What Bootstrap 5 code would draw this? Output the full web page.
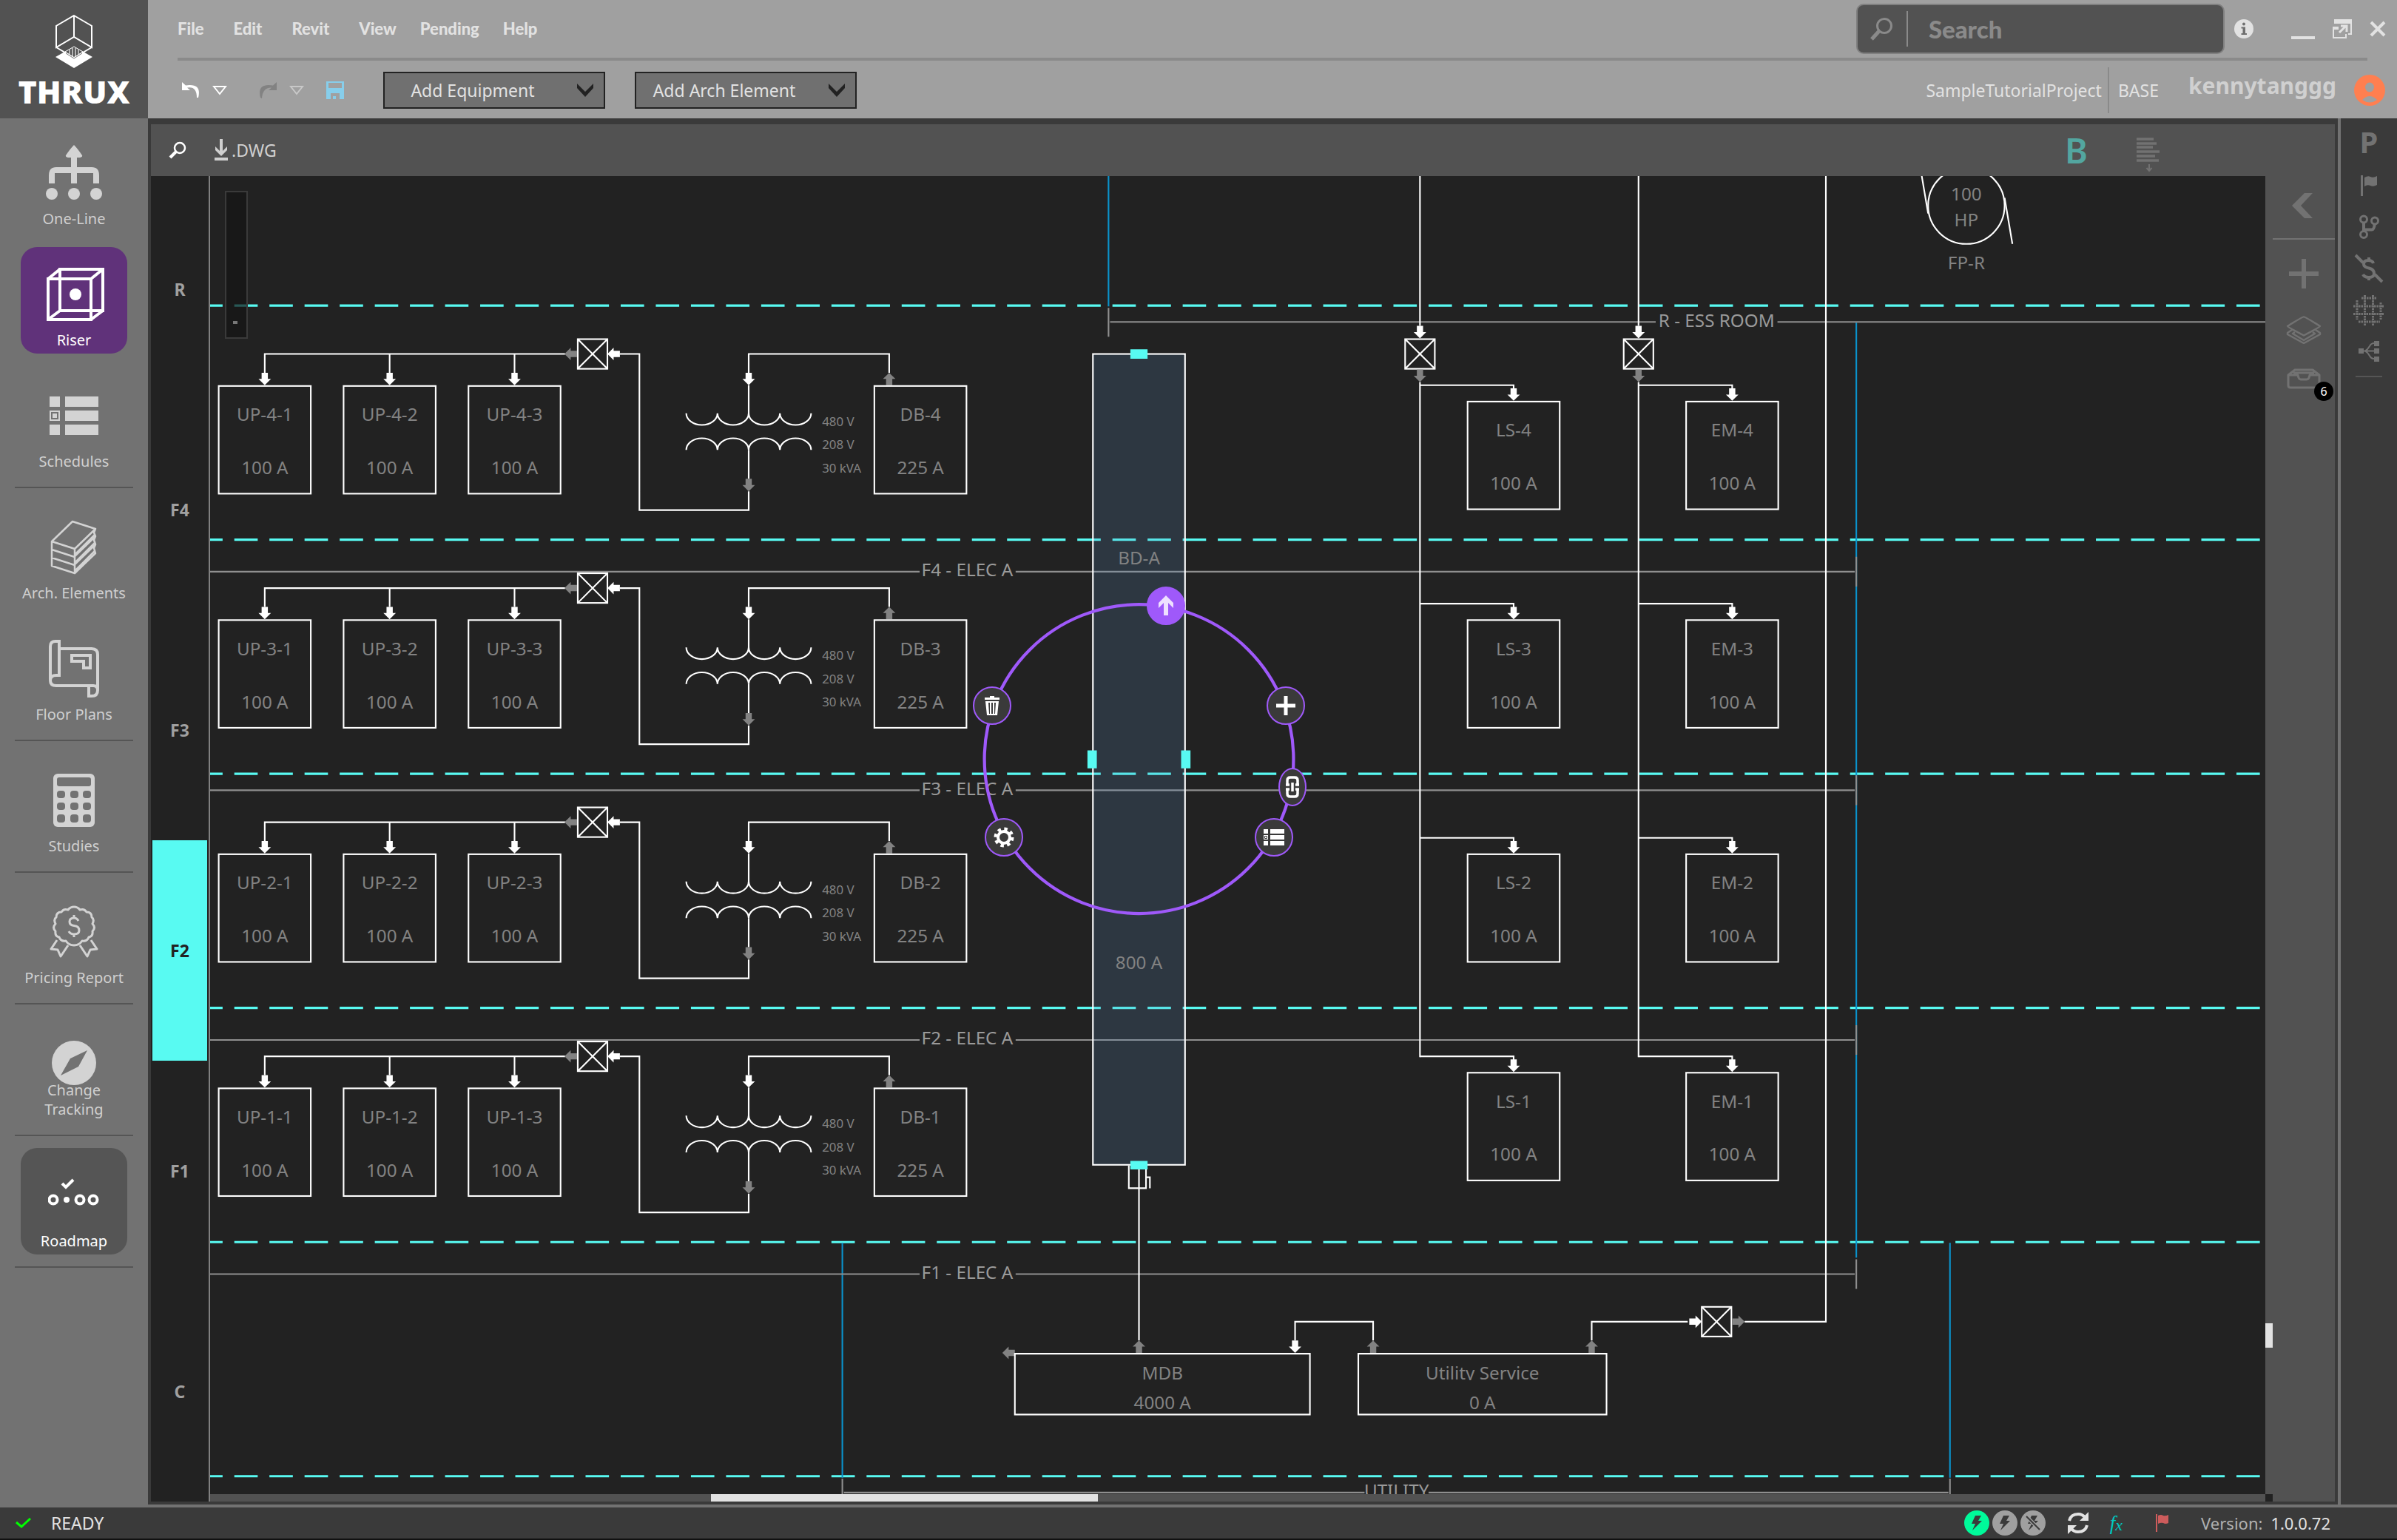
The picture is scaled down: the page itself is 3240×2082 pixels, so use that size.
<!DOCTYPE html>
<html lang="en">
<head>
<meta charset="utf-8">
<meta name="viewport" content="width=device-width, initial-scale=1">
<title>THRUX – Riser</title>
<link href="https://cdn.jsdelivr.net/npm/bootstrap@5.3.0/dist/css/bootstrap.min.css" rel="stylesheet">
<style>
:root{--ink:#222;--deep:#3a3a3a;--panel:#525252;--mid:#727272;--bar:#a0a0a0;--cyan:#58faf2;--violet:#9f59fa}
body{font-family:"Noto Sans","Open Sans",sans-serif;font-size:23px;line-height:32px;background:var(--deep);color:#d0d0d0}
button{background:none;border:0;padding:0;color:inherit;display:inline-flex;align-items:center;justify-content:center}
svg{display:block;flex:none}
a{text-decoration:none}
.min-0{min-width:0;min-height:0}
/* header */
.brand-box{width:200px;background:var(--panel);padding-top:20px;gap:8px}
.brand-name{font-family:"Open Sans",sans-serif;font-weight:800;font-size:43px;line-height:44px;color:#fff}
.top-bar{background:var(--bar)}
.menu-row,.tool-row{height:78px}
.menu-row{padding:0 15px 0 40px}
.menu-row .nav{gap:40px;font-family:Lato,sans-serif;font-weight:900;font-size:22px}
.menu-row .nav a{color:#e2e2e2}
.menu-row .nav .near{margin-left:-8px}
.search-box{width:498px;height:68px;background:var(--panel);border:2px solid #808080;border-radius:10px;color:#8a8a8a}
.search-box input{background:none;border:0;outline:0;color:#8a8a8a;font-family:Lato,sans-serif;font-weight:900;font-size:33px;min-width:0;padding:0 0 0 4px}
.search-box input::placeholder{color:#8a8a8a;opacity:1}
.v-rule{width:2px;background:#8a8a8a}
.head-rule{height:4px;background:#8a8a8a;margin:0 40px}
.win-btns{color:#e2e2e2}
.win-btns .info{margin:0 51px 0 13px}
.tool-row{padding:2px 16px 0 45px}
.redo{margin-left:42px}
.save{margin-left:30px}
.pick{width:300px;height:50px;margin-left:40px}
.save+.pick{margin-left:53px}
.pick select{appearance:none;width:300px;height:50px;background:#707070;border:2px solid var(--ink);color:#e2e2e2;padding:0 58px 0 0;text-align:center;text-align-last:center}
.pick svg{margin-left:-38px;pointer-events:none}
.account{color:#e2e2e2}
.account .v-rule{height:62px}
.user-name{font-weight:700;font-size:30px;color:#d0d0d0;margin-left:40px;padding-bottom:12px}
/* left navigation */
.side-nav{width:200px;background:var(--mid);padding:10px 20px;font-size:20px;line-height:26px;color:#d0d0d0}
.side-nav a{color:inherit;height:144px;margin:0 8px;padding:0 0 5px;border-radius:22px;white-space:nowrap}
.side-nav a+a{margin-top:20px}
.side-nav hr{margin:16px 0;border:0;height:2px;background:#555;opacity:1}
.side-nav .pic{height:112px;padding-top:14px}
.side-nav .on{background:#60327a;color:#fff}
.side-nav .road{background:#555;color:#fff}
.side-nav .snug{margin-top:-6px}
/* work area */
.work{padding:8px 4px 4px}
.sheet{background:var(--panel)}
.sheet-bar{height:70px;padding:0 232px 0 24px}
.dwg{margin-left:37px}
.bold-b{color:#53a6a0;font-weight:600;font-size:47px;line-height:60px;margin-right:62px}
.levels{width:80px;background:var(--ink);border-right:2px solid #808080;padding:4px 2px 0;font-weight:700;font-size:23px;color:#a0a0a0}
.levels div{height:298px}
.levels .cur{background:var(--cyan);color:var(--ink)}
.stage{background:var(--ink);min-height:0}
.stage>svg{position:absolute;inset:0;width:100%;height:100%}
.zoom-strip{position:absolute;left:20px;top:20px;width:31px;height:200px;background:rgba(20,20,20,.7);border:2px solid #3a3a3a}
.zoom-strip i{position:absolute;left:9px;top:174px;width:6px;height:4px;background:#777}
.orb{position:absolute;width:52px;height:52px;border-radius:50%;background:var(--deep);border:2px solid var(--violet);color:#fff}
.o-up{left:1266px;top:555px;background:var(--violet)}
.o-bin{left:1031px;top:690px}
.o-add{left:1428px;top:690px}
.o-link{left:1444px;top:800px;width:38px}
.o-gear{left:1047px;top:868px}
.o-list{left:1412px;top:868px}
.h-track{height:10px;background:var(--panel)}
.h-thumb{margin-left:677px;width:523px;background:#e2e2e2}
.v-track{width:10px}
.v-thumb{margin-top:1551px;height:33px;background:#e2e2e2}
.v-corner{height:10px;background:var(--ink)}
.dock{width:84px;color:var(--mid)}
.dock .rule2{height:2px;background:var(--mid);margin-bottom:8px}
.dock button{height:76px}
.dock .first{height:84px;padding:0 5px 4px 0}
.dock .inbox{height:56px}
.count{position:absolute;left:56px;top:32px;width:26px;height:26px;border-radius:50%;background:#000;color:#fff;font-size:16px;line-height:26px}
.rail{width:80px;border-left:4px solid var(--mid);background:var(--deep);color:var(--mid)}
.rail button{height:56px}
.rail .rail-p{height:63px;font-weight:700;font-size:40px}
.rail .rule3{width:36px;height:2px;background:#555;margin:5px auto}
/* drawing */
.lvl{stroke:var(--cyan);stroke-width:3;stroke-dasharray:30 15}
.wire{stroke:#fff;stroke-width:2;fill:none}
.room{stroke:#8f8f8f;stroke-width:2;fill:none}
.bound{stroke:#0a93cc;stroke-width:2;fill:none}
.in{fill:#fff}.out{fill:#828282}
.tag{fill:#828282;font-size:23px;text-anchor:middle}
.tiny{fill:#828282;font-size:16px}
.area{fill:#9a9a9a;font-size:23px;text-anchor:middle}
/* status */
.status{border-top:4px solid var(--mid);border-bottom:2px solid #111;height:48px;padding:0 90px 0 21px;color:#e2e2e2}
.ready{margin-left:26px}
.sync{margin-left:28px}
.fx{color:#00c8c0;font-family:"Liberation Serif",serif;font-size:27px}
.fx span{font-size:22px;padding-top:6px}
.issues{margin-left:44px}
.ver{font-size:22px;gap:11px;margin-left:42px}
.ver span{color:#b0b0b0}
</style>
<script src="https://cdn.jsdelivr.net/npm/bootstrap@5.3.0/dist/js/bootstrap.bundle.min.js"></script>
</head>
<body class="d-flex flex-column vh-100 overflow-hidden">
<header class="d-flex">
  <div class="brand-box d-flex flex-column align-items-center">
    <svg width="52" height="74" viewBox="0 0 52 74" fill="none" stroke="#fff" stroke-width="2"><path d="M26 43 1 57 26 72 51 57Z" fill="#fff" stroke="none"/><path d="M26 43 14 50 26 58 38 50Z" fill="#525252" stroke-width="1"/><path d="M20 47V54M24 45V56M28 45V56M32 47V54" stroke-width="2" stroke="#b5b5b5"/><path d="M26 1 50 15V44L26 30 2 44V15ZM26 1V30"/><path d="M2 44 26 58 50 44"/><path d="M15 52 26 59 37 52" stroke="#777" stroke-width="1"/></svg>
    <div class="brand-name">THRUX</div>
  </div>
  <div class="top-bar flex-grow-1">
    <div class="menu-row d-flex align-items-center">
      <nav class="nav me-auto" aria-label="Main menu">
        <a href="#">File</a><a href="#">Edit</a><a href="#">Revit</a><a href="#">View</a><a href="#" class="near">Pending</a><a href="#" class="near">Help</a>
      </nav>
      <label class="search-box d-flex align-items-center">
        <svg class="ms-3" width="34" height="34" viewBox="0 0 34 34" fill="none" stroke="currentColor"><circle cx="20" cy="13" r="9.500" stroke-width="3"/><path d="M13 20 3 31" stroke-width="5"/></svg>
        <span class="v-rule ms-3 my-2 align-self-stretch"></span>
        <input class="ms-4 flex-grow-1" type="search" placeholder="Search" aria-label="Search">
      </label>
      <div class="win-btns d-flex align-items-center">
        <button aria-label="Information" class="info"><svg width="26" height="26" viewBox="0 0 26 26"><circle cx="13" cy="13" r="13" fill="#e2e2e2"/><path d="M9.500 10.500H15V19H17V21H9.500V19H11.500V12.500H9.500Z" fill="#707070"/><circle cx="13" cy="6.500" r="2" fill="#707070"/></svg></button>
        <button aria-label="Minimize" class="me-4"><svg width="32" height="30" viewBox="0 0 32 30"><path d="M0 27H32" stroke="currentColor" stroke-width="4"/></svg></button>
        <button aria-label="Restore" class="me-4"><svg width="26" height="26" viewBox="0 0 26 26" fill="none" stroke="currentColor" stroke-width="2"><path d="M3 5V1H25V20H21M7 11H1V25H18V20"/><path d="M2 0H26V6H2ZM1 10H8V14H1Z" fill="currentColor" stroke="none"/><path d="M9 18 18 9M11 9H19V17" stroke-width="3"/></svg></button>
        <button aria-label="Close"><svg width="22" height="22" viewBox="0 0 22 22"><path d="M2 2 20 20M20 2 2 20" stroke="currentColor" stroke-width="4"/></svg></button>
      </div>
    </div>
    <div class="head-rule"></div>
    <div class="tool-row d-flex align-items-center">
      <button aria-label="Undo"><svg width="26" height="24" viewBox="0 0 26 24"><path d="M1 1V12H12L8 8.500Q21 6 21 22L23 22Q28 2 6 5.500Z" fill="#fff"/></svg></button>
      <button aria-label="Undo list" class="ms-3"><svg width="20" height="16" viewBox="0 0 20 16"><path d="M2 3H18L10 13Z" fill="none" stroke="#fff" stroke-width="2"/></svg></button>
      <button aria-label="Redo" class="redo"><svg width="26" height="24" viewBox="0 0 26 24"><path d="M25 1V12H14L18 8.500Q6 8 5 23L3 22Q-2 2 20 5.500Z" fill="#828282"/></svg></button>
      <button aria-label="Redo list" class="ms-3"><svg width="20" height="16" viewBox="0 0 20 16"><path d="M2 3H18L10 13Z" fill="none" stroke="#c8c8c8" stroke-width="2"/></svg></button>
      <button aria-label="Save" class="save"><svg width="24" height="24" viewBox="0 0 24 24"><path d="M0 0H24V24H18V16H6V24H0ZM3 2V9H21V2ZM9 20H13V24H9Z" fill="#87ceeb" fill-rule="evenodd"/></svg></button>
      <div class="pick d-flex align-items-center"><select aria-label="Add Equipment"><option>Add Equipment</option></select><svg width="22" height="20" viewBox="0 0 22 20"><path d="M0 1 11 12 22 1V7L11 19 0 7Z" fill="#222"/></svg></div>
      <div class="pick d-flex align-items-center"><select aria-label="Add Arch Element"><option>Add Arch Element</option></select><svg width="22" height="20" viewBox="0 0 22 20"><path d="M0 1 11 12 22 1V7L11 19 0 7Z" fill="#222"/></svg></div>
      <div class="account ms-auto d-flex align-items-center">
        <span>SampleTutorialProject</span>
        <span class="v-rule mx-2"></span>
        <span class="ms-1">BASE</span>
        <span class="user-name">kennytanggg</span>
        <svg class="ms-4" width="42" height="42" viewBox="0 0 42 42"><circle cx="21" cy="21" r="21" fill="#ff7f50"/><ellipse cx="21" cy="17" rx="6" ry="6.500" fill="#a0a0a0"/><path d="M11 34Q21 24 31 34Q21 41 11 34Z" fill="#a0a0a0"/></svg>
      </div>
    </div>
  </div>
</header>

<main class="d-flex flex-grow-1 min-0">
  <nav class="side-nav text-center" aria-label="Modules">
    <a href="#" class="d-flex flex-column align-items-center justify-content-end"><span class="pic d-flex align-items-center"><svg width="76" height="76" viewBox="0 0 76 76" fill="#d3d3d3"><path d="M38 0Q43 5 49 14Q50 16 46 17H42V30H62Q72 30 72 41V52H64V38H42V52H34V38H12V52H4V41Q4 30 14 30H34V17H30Q26 16 27 14Q33 5 38 0Z"/><circle cx="8" cy="66" r="8"/><circle cx="38" cy="66" r="8"/><circle cx="68" cy="66" r="8"/></svg></span>One-Line</a>
    <a href="#" class="on d-flex flex-column align-items-center justify-content-end" aria-current="page"><span class="pic d-flex align-items-center ps-1"><svg width="78" height="74" viewBox="0 0 78 74" fill="none" stroke="#fff" stroke-width="4"><path d="M2 16H60V71H2ZM18 3H76V59H18ZM2 16 18 3M60 16 76 3M2 71 18 59M60 71 76 59"/><circle cx="39" cy="37" r="8" fill="#fff" stroke="none"/></svg></span>Riser</a>
    <a href="#" class="d-flex flex-column align-items-center justify-content-end"><span class="pic d-flex align-items-center"><svg width="66" height="52" viewBox="0 0 66 52" fill="#d3d3d3"><path d="M0 0H14V14H0ZM21 0H66V14H21ZM0 19H14V33H0ZM21 19H66V33H21ZM0 38H14V52H0ZM21 38H66V52H21Z"/><path d="M3 22H11V30H3Z" stroke="#727272" stroke-width="2"/></svg></span>Schedules</a>
    <hr>
    <a href="#" class="d-flex flex-column align-items-center justify-content-end"><span class="pic d-flex align-items-center"><svg width="64" height="74" viewBox="0 0 64 74" fill="none" stroke="#d3d3d3" stroke-width="2.500" stroke-linejoin="round"><path d="M2 29 30 2 61 12 33 39ZM2 29V62L33 72V39M2 40 33 50M2 51 33 61M33 49 61 22 59 17 61 12M33 60 61 33 59 27 61 22M33 72 61 45 59 38 61 33M34 46 60 20M34 57 60 31M34 68 60 42"/></svg></span>Arch. Elements</a>
    <a href="#" class="d-flex flex-column align-items-center justify-content-end"><span class="pic d-flex align-items-center"><svg width="68" height="78" viewBox="0 0 68 78" fill="none" stroke="#d3d3d3" stroke-width="4"><path d="M2 54V9Q2 2 9 2H14V48H10Q2 48 2 55Q2 62 10 62H60Q66 62 66 68Q66 76 58 76H54V62M14 12H58Q66 12 66 20V68"/><path d="M31 21H56V38H47V29H31Z"/></svg></span>Floor Plans</a>
    <hr>
    <a href="#" class="d-flex flex-column align-items-center justify-content-end"><span class="pic d-flex align-items-center"><svg width="56" height="72" viewBox="0 0 56 72"><rect width="56" height="72" rx="6" fill="#d3d3d3"/><g fill="#727272"><rect x="5" y="5" width="46" height="12" rx="3"/><rect x="5" y="23" width="11" height="10" rx="4"/><rect x="23" y="23" width="11" height="10" rx="4"/><rect x="40" y="23" width="11" height="10" rx="4"/><rect x="5" y="39" width="11" height="10" rx="4"/><rect x="23" y="39" width="11" height="10" rx="4"/><rect x="40" y="39" width="11" height="10" rx="4"/><rect x="5" y="55" width="11" height="11" rx="4"/><rect x="23" y="55" width="11" height="11" rx="4"/><rect x="40" y="55" width="11" height="11" rx="4"/></g></svg></span>Studies</a>
    <hr>
    <a href="#" class="d-flex flex-column align-items-center justify-content-end"><span class="pic d-flex align-items-center"><svg width="66" height="72" viewBox="0 0 66 72" fill="none" stroke="#d3d3d3" stroke-width="3" stroke-linejoin="round"><path d="M33 2Q38 2 41 6Q47 4 50 9Q57 9 57 16Q61 19 58 25Q63 30 58 35Q59 42 53 43Q51 49 44 48Q40 54 33 54Q26 54 22 48Q15 49 13 43Q7 42 8 35Q3 30 8 25Q5 19 9 16Q9 9 16 9Q19 4 25 6Q28 2 33 2Z"/><path d="M10 47 2 59 11 60 15 69 25 54M56 47 64 59 55 60 51 69 41 54"/><path d="M39 21Q37 17 33 17Q27 17 27 22Q27 27 33 27.500Q40 28 40 34Q40 39 33 39Q28 39 26 35M33 13V17M33 39V43"/></svg></span>Pricing Report</a>
    <hr>
    <a href="#" class="d-flex flex-column align-items-center justify-content-end"><svg width="60" height="60" viewBox="0 0 60 60"><circle cx="30" cy="30" r="30" fill="#d3d3d3"/><path d="M48 13 36 35 12 47 25 24Z" fill="#727272"/></svg><span class="snug">Change<br>Tracking</span></a>
    <hr>
    <a href="#" class="road d-flex flex-column align-items-center justify-content-end"><span class="pic d-flex align-items-center pt-1"><svg width="70" height="40" viewBox="0 0 70 40" fill="none" stroke="#fff" stroke-width="4"><circle cx="7" cy="31" r="5.500"/><circle cx="25" cy="31" r="4" fill="#fff" stroke="none"/><circle cx="43" cy="31" r="5.500"/><circle cx="61" cy="31" r="5.500"/><path d="M19 9 24 14 34 4"/></svg></span>Roadmap</a>
    <hr>
  </nav>

  <section class="work flex-grow-1 d-flex min-0">
    <div class="sheet d-flex flex-column flex-grow-1 min-0">
      <div class="sheet-bar d-flex align-items-center">
        <button aria-label="Find"><svg width="24" height="24" viewBox="0 0 24 24" fill="none" stroke="#fff"><circle cx="15" cy="9" r="7" stroke-width="2.500"/><path d="M10 14 2 22" stroke-width="4"/></svg></button>
        <button class="dwg me-auto"><svg width="20" height="30" viewBox="0 0 20 30"><path d="M8 0H12V16L18 10V15L10 23 2 15V10L8 16ZM1 25H19V29H1Z" fill="#d0d0d0"/></svg><span class="ps-1">.DWG</span></button>
        <button class="bold-b">B</button>
        <button aria-label="Report" class="mt-4 pb-2"><svg width="40" height="50" viewBox="0 0 40 50"><path d="M4 2H27M4 8H31M4 13H26M4 19H35M4 25H29M4 31H34" stroke="#727272" stroke-width="3.500"/><path d="M21 36V45M17.500 41 21 45 24.500 41" stroke="#727272" stroke-width="2" fill="none"/></svg></button>
      </div>
      <div class="d-flex flex-grow-1 min-0">
        <div class="levels text-center">
          <div class="d-flex align-items-center justify-content-center">R</div>
          <div class="d-flex align-items-center justify-content-center">F4</div>
          <div class="d-flex align-items-center justify-content-center">F3</div>
          <div class="cur d-flex align-items-center justify-content-center">F2</div>
          <div class="d-flex align-items-center justify-content-center">F1</div>
          <div class="d-flex align-items-center justify-content-center">C</div>
        </div>
        <div class="d-flex flex-column flex-grow-1 min-0">
          <div class="stage position-relative overflow-hidden flex-grow-1">
            <svg viewBox="-1 -6 2633 1689" preserveAspectRatio="xMinYMin slice" role="img" aria-label="Riser diagram">
              <defs>
                <path id="ar" d="M-4-16H4V-8H8L0 0-8-8H-4Z"/>
                <g id="bx"><rect x="-59" width="118" height="138" class="wire"/></g>
                <g id="sw"><rect x="-19" y="-19" width="38" height="38" class="wire"/><path d="M-19-19 19 19M19-19-19 19" class="wire"/></g>
                <g id="flr">
                  <path class="wire" d="M69 246V222H454M229 246V222M389 246V222M524 222H549V422H689V398M689 382V345M689 302V262M689 246V222H869V246"/>
                  <path class="wire" d="M609 298a20 15 0 0 0 40 0a20 15 0 0 0 40 0a20 15 0 0 0 40 0a20 15 0 0 0 40 0M609 345a20 15 0 0 1 40 0a20 15 0 0 1 40 0a20 15 0 0 1 40 0a20 15 0 0 1 40 0"/>
                  <g class="in"><use href="#ar" x="69" y="262"/><use href="#ar" x="229" y="262"/><use href="#ar" x="389" y="262"/><use href="#ar" x="689" y="262"/><use href="#ar" transform="translate(508 222) rotate(90)"/></g>
                  <g class="out"><use href="#ar" transform="translate(453 222) rotate(90)"/><use href="#ar" x="689" y="398"/><use href="#ar" transform="translate(869 246) rotate(180)"/></g>
                  <use href="#sw" x="489" y="222"/>
                  <use href="#bx" x="69" y="263"/><use href="#bx" x="229" y="263"/><use href="#bx" x="389" y="263"/><use href="#bx" x="909" y="263"/>
                  <g class="tiny"><text x="783" y="314">480 V</text><text x="783" y="344">208 V</text><text x="783" y="374">30 kVA</text></g>
                </g>
                <g id="brn"><path class="wire" d="M0 0H120V5"/><use href="#ar" x="120" y="20" class="in"/><use href="#bx" x="120" y="21"/></g>
                <clipPath id="nameClip"><rect x="1470" y="1510" width="318" height="27"/></clipPath>
              </defs>
              <path class="lvl" d="M-15 160H3000M-15 460H3000M-15 760H3000M-15 1060H3000M-15 1360H3000M-15 1660H3000" fill="none"/>
              <path class="bound" d="M1150-6V161M2108 182V1380M809 1361V1662M2228 1361V1662"/>
              <g class="room">
                <path d="M1150 163V200M1152 181H1851M2007 181H2640"/>
                <path d="M-6 501H908M1031 501H2106M2108 482V520M-6 781H908M1031 781H2106M2108 762V800M-6 1101H908M1031 1101H2106M2108 1082V1120M-6 1401H908M1031 1401H2106M2108 1382V1420"/>
                <path d="M809 1663V1700M2228 1663V1700M811 1681H1478M1560 1681H2226"/>
              </g>
              <g class="area"><text x="969" y="507">F4 - ELEC A</text><text x="969" y="787">F3 - ELEC A</text><text x="969" y="1107">F2 - ELEC A</text><text x="969" y="1407">F1 - ELEC A</text><text x="1929" y="187">R - ESS ROOM</text><text x="1519" y="1687">UTILITY</text></g>
              <use href="#flr"/><use href="#flr" y="300"/><use href="#flr" y="600"/><use href="#flr" y="900"/>
              <g class="tag">
                <text x="69" y="308">UP-4-1</text><text x="69" y="376">100 A</text><text x="229" y="308">UP-4-2</text><text x="229" y="376">100 A</text><text x="389" y="308">UP-4-3</text><text x="389" y="376">100 A</text><text x="909" y="308">DB-4</text><text x="909" y="376">225 A</text>
                <text x="69" y="608">UP-3-1</text><text x="69" y="676">100 A</text><text x="229" y="608">UP-3-2</text><text x="229" y="676">100 A</text><text x="389" y="608">UP-3-3</text><text x="389" y="676">100 A</text><text x="909" y="608">DB-3</text><text x="909" y="676">225 A</text>
                <text x="69" y="908">UP-2-1</text><text x="69" y="976">100 A</text><text x="229" y="908">UP-2-2</text><text x="229" y="976">100 A</text><text x="389" y="908">UP-2-3</text><text x="389" y="976">100 A</text><text x="909" y="908">DB-2</text><text x="909" y="976">225 A</text>
                <text x="69" y="1208">UP-1-1</text><text x="69" y="1276">100 A</text><text x="229" y="1208">UP-1-2</text><text x="229" y="1276">100 A</text><text x="389" y="1208">UP-1-3</text><text x="389" y="1276">100 A</text><text x="909" y="1208">DB-1</text><text x="909" y="1276">225 A</text>
                <text x="1669" y="328">LS-4</text><text x="1669" y="396">100 A</text><text x="1949" y="328">EM-4</text><text x="1949" y="396">100 A</text>
                <text x="1669" y="608">LS-3</text><text x="1669" y="676">100 A</text><text x="1949" y="608">EM-3</text><text x="1949" y="676">100 A</text>
                <text x="1669" y="908">LS-2</text><text x="1669" y="976">100 A</text><text x="1949" y="908">EM-2</text><text x="1949" y="976">100 A</text>
                <text x="1669" y="1188">LS-1</text><text x="1669" y="1256">100 A</text><text x="1949" y="1188">EM-1</text><text x="1949" y="1256">100 A</text>
                <text x="2249" y="25">100</text><text x="2249" y="58">HP</text><text x="2249" y="113">FP-R</text>
                <text x="1219" y="1536">MDB</text><text x="1219" y="1574">4000 A</text><text x="1629" y="1536" clip-path="url(#nameClip)">Utility Service</text><text x="1629" y="1574">0 A</text>
              </g>
              <path class="wire" d="M1549-6V186M1549 258V1123M1829-6V186M1829 258V1123M2069-6V1462H1965M1892 1462H1769V1486M1389 1486V1462H1489V1486M1189 1486V1262"/>
              <use href="#brn" x="1549" y="262"/><use href="#brn" x="1549" y="542"/><use href="#brn" x="1549" y="842"/><use href="#brn" x="1549" y="1122"/>
              <use href="#brn" x="1829" y="262"/><use href="#brn" x="1829" y="542"/><use href="#brn" x="1829" y="842"/><use href="#brn" x="1829" y="1122"/>
              <use href="#sw" x="1549" y="222"/><use href="#sw" x="1829" y="222"/><use href="#sw" x="1929" y="1462"/>
              <g class="in"><use href="#ar" x="1549" y="202"/><use href="#ar" x="1829" y="202"/><use href="#ar" x="1389" y="1502"/><use href="#ar" transform="translate(1910 1462) rotate(-90)"/></g>
              <g class="out"><use href="#ar" x="1549" y="258"/><use href="#ar" x="1829" y="258"/><use href="#ar" transform="translate(1189 1486) rotate(180)"/><use href="#ar" transform="translate(1489 1486) rotate(180)"/><use href="#ar" transform="translate(1769 1486) rotate(180)"/><use href="#ar" transform="translate(1965 1462) rotate(-90)"/><use href="#ar" transform="translate(1014 1502) rotate(90)"/></g>
              <path class="wire" d="M1030 1503H1408V1581H1030ZM1470 1503H1788V1581H1470Z"/>
              <circle class="wire" cx="2249" cy="32" r="49"/><path class="wire" d="M2190-17 2200 42M2298 22 2308 81"/>
              <path class="wire" d="M1176 1262V1291H1198V1262M1198 1277H1203V1291"/>
              <rect x="1130" y="222" width="118" height="1039" fill="rgba(89,139,189,.2)" stroke="#fff" stroke-width="2"/>
              <g class="tag"><text x="1189" y="492">BD-A</text><text x="1189" y="1010">800 A</text></g>
              <path fill="#58faf2" d="M1178 216H1200V228H1178ZM1178 1256H1200V1267H1178ZM1123 730H1135V753H1123ZM1243 730H1255V753H1243Z"/>
              <circle cx="1189" cy="741" r="198" fill="none" stroke="#9f59fa" stroke-width="4"/>
            </svg>
            <div class="zoom-strip"><i></i></div>
            <button class="orb o-up" aria-label="Go up"><svg width="26" height="30" viewBox="0 0 26 30"><path d="M10 28V11L3 18V11L13 1 23 11V18L16 11V28Z" fill="#eee0ff"/></svg></button>
            <button class="orb o-bin" aria-label="Delete"><svg width="20" height="26" viewBox="0 0 20 26"><path d="M7 0H13V2H20V5H0V2H7ZM1 7H19L17 26H3ZM5 9 6 24H7V9ZM9 9V24H11V9ZM13 9V24H14L15 9Z" fill="#fff" fill-rule="evenodd"/></svg></button>
            <button class="orb o-add" aria-label="Add"><svg width="28" height="28" viewBox="0 0 28 28"><path d="M14 1V27M1 14H27" stroke="#fff" stroke-width="5"/></svg></button>
            <button class="orb o-link" aria-label="Link"><svg width="18" height="30" viewBox="0 0 18 30" fill="none" stroke="#fff" stroke-width="3.500"><path d="M2 13V6Q2 2 6 2H12Q16 2 16 6V13M2 17V24Q2 28 6 28H12Q16 28 16 24V17M0 12H5M13 12H18M0 18H5M13 18H18M9 9V21"/></svg></button>
            <button class="orb o-gear" aria-label="Settings"><svg width="28" height="28" viewBox="-14 -14 28 28"><circle r="8" fill="none" stroke="#fff" stroke-width="4"/><circle r="11" fill="none" stroke="#fff" stroke-width="5" stroke-dasharray="4.320 4.320"/></svg></button>
            <button class="orb o-list" aria-label="Schedule"><svg width="28" height="22" viewBox="0 0 28 22" fill="#fff"><path d="M0 0H6V6H0ZM9 0H28V6H9ZM0 8H6V14H0ZM9 8H28V14H9ZM0 16H6V22H0ZM9 16H28V22H9Z"/><path d="M1.500 9.500H4.500V12.500H1.500Z" stroke="#3a3a3a"/></svg></button>
          </div>
          <div class="h-track d-flex"><div class="h-thumb"></div></div>
        </div>
        <div class="v-track d-flex flex-column"><div class="v-thumb"></div><div class="v-corner mt-auto"></div></div>
        <div class="dock d-flex flex-column">
          <button class="first" aria-label="Collapse"><svg width="30" height="36" viewBox="0 0 30 36"><path d="M18 1H29L13 18 29 35H18L1 18Z" fill="currentColor"/></svg></button>
          <div class="rule2"></div>
          <button aria-label="Add view"><svg width="40" height="40" viewBox="0 0 40 40"><path d="M20 0V40M0 20H40" stroke="currentColor" stroke-width="6"/></svg></button>
          <button aria-label="Layers"><svg width="48" height="38" viewBox="0 0 48 38" fill="none" stroke="currentColor" stroke-width="2.500" stroke-linejoin="round"><path d="M24 1.500Q25 1 46 14Q46 15 24 26.500Q2 15 2 14Q23 1 24 1.500ZM8 19 2 23V25L24 37 46 25V23L40 19"/><path d="M12 22 9 24 24 33 39 24 36 22"/></svg></button>
          <button class="inbox position-relative" aria-label="Inbox"><svg width="46" height="28" viewBox="0 0 46 28" fill="none" stroke="currentColor" stroke-width="3" stroke-linejoin="round"><path d="M2 9 11 2H35L44 9V23Q44 26 41 26H5Q2 26 2 23ZM2 9H15Q16 15 19 15H27Q30 15 31 9H44M9 6H37"/></svg><span class="count">6</span></button>
        </div>
      </div>
    </div>
  </section>

  <aside class="rail d-flex flex-column">
    <button class="rail-p">P</button>
    <button aria-label="Flag"><svg width="24" height="28" viewBox="0 0 24 28" fill="currentColor"><path d="M1 0H4V28H1ZM6 3Q11 0 14 2Q18 4 23 1V13Q18 16 14 14Q10 12 6 15Z"/></svg></button>
    <button aria-label="Branches"><svg width="28" height="34" viewBox="0 0 28 34" fill="none" stroke="currentColor" stroke-width="3"><circle cx="7" cy="6.500" r="4.500"/><circle cx="22" cy="8.500" r="4.500"/><circle cx="7" cy="27" r="4.500"/><path d="M7 10V23M7 20.500H18Q21 20.500 22 12" stroke-width="4"/></svg></button>
    <button aria-label="Hide prices"><svg width="40" height="40" viewBox="0 0 40 40" fill="none" stroke="currentColor" stroke-width="4"><path d="M2 2 12 12M28 28 38 38M26 13Q25 9 19 9Q13 9 13 14Q13 18 20 19.500Q27 21 27 27Q27 32 20 32Q14 32 12 28M20 5V9M20 32V36"/></svg></button>
    <button aria-label="Grid"><svg width="42" height="42" viewBox="0 0 42 42" fill="none" stroke="currentColor" stroke-width="3" stroke-dasharray="2.500 1"><path d="M15.500 1V42M26.500 1V42M5 8V34M37 11V34M0 16H42M0 26.500H42M7 37H36M11 5H31"/></svg></button>
    <button aria-label="Hierarchy"><svg width="30" height="30" viewBox="0 0 30 30"><path d="M1 11H8V18H1ZM22 1H29V8H22ZM22 11H29V18H22ZM22 22H29V29H22Z" fill="currentColor"/><path d="M8 14.500H22M10 14.500Q13 13 16 8Q18 4 22 4M10 14.500Q13 16 16 21Q18 25 22 25" fill="none" stroke="currentColor" stroke-width="2"/></svg></button>
    <div class="rule3"></div>
  </aside>
</main>

<footer class="status d-flex align-items-center">
  <svg width="22" height="14" viewBox="0 0 22 14"><path d="M1 6 8 12 20 1" fill="none" stroke="#0f0" stroke-width="3"/></svg>
  <span class="ready me-auto">READY</span>
  <svg width="112" height="36" viewBox="0 0 112 36"><circle cx="18" cy="18" r="17" fill="#00fa9a"/><circle cx="56" cy="18" r="17" fill="#a0a0a0"/><circle cx="94" cy="18" r="17" fill="#a0a0a0"/><g fill="#3a3a3a"><path id="bolt" d="M16 8H24L20 15H25L12 28 16 19H11Z"/><use href="#bolt" x="38"/><use href="#bolt" x="76"/></g><path d="M85 9 103 27" stroke="#a0a0a0" stroke-width="5"/><path d="M85 9 103 27" stroke="#3a3a3a" stroke-width="2"/></svg>
  <button aria-label="Refresh" class="sync"><svg width="30" height="32" viewBox="0 0 30 32" fill="none" stroke="#e2e2e2" stroke-width="4"><path d="M3 13Q5 4 15 4Q21 4 25 9M27 19Q25 28 15 28Q9 28 5 23"/><path d="M29 1V13H17ZM1 31V19H13Z" fill="#e2e2e2" stroke="none"/></svg></button>
  <button aria-label="Functions" class="fx fst-italic ms-4 ps-1">f<span>x</span></button>
  <button aria-label="Issues" class="issues"><svg width="20" height="24" viewBox="0 0 20 24" fill="#cd5c5c"><path d="M1 0H3V24H1ZM4 2Q8 0 11 2Q14 3 18 1V12Q14 14 11 12Q8 11 4 13Z"/></svg></button>
  <div class="ver d-flex"><span>Version:</span>1.0.0.72</div>
</footer>
</body>
</html>
